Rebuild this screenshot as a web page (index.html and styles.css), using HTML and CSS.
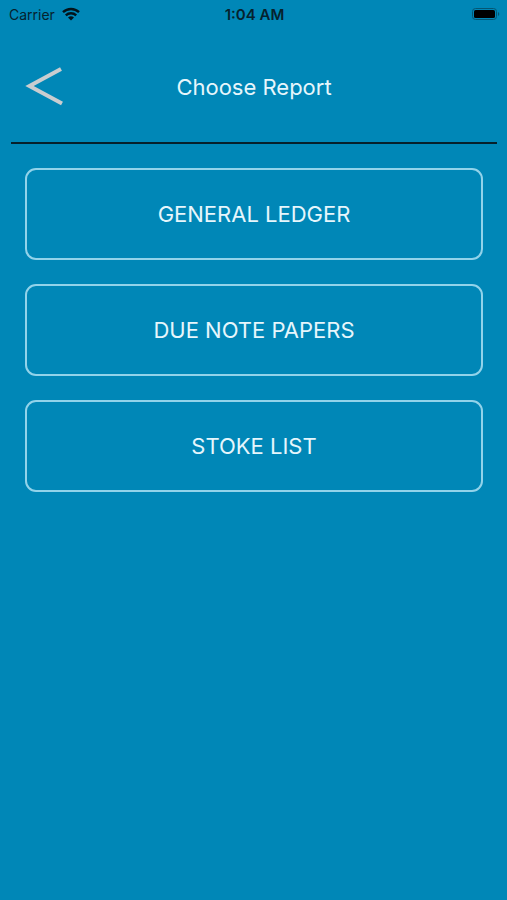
FILE: index.html
```html
<!DOCTYPE html>
<html lang="en">
<head>
<meta charset="utf-8">
<meta name="viewport" content="width=device-width, initial-scale=1">
<title>Choose Report</title>
<link rel="stylesheet" href="styles.css">
</head>
<body>
<div class="status">
  <div class="carrier">
    <span>Carrier</span>
    <svg class="wifi" viewBox="0 0 18 14" aria-hidden="true">
      <path d="M1 5.2a11.6 11.6 0 0 1 16 0M3.8 8.3a7.6 7.6 0 0 1 10.4 0"/>
      <path class="solid" d="M6 10.6a4.3 4.3 0 0 1 6 0L9 13.6z"/>
    </svg>
  </div>
  <time class="clock">1:04 AM</time>
  <svg class="battery" viewBox="0 0 28 12" aria-hidden="true">
    <rect class="shell" x=".5" y=".5" width="24" height="11" rx="3"/>
    <rect x="2" y="2" width="21" height="8" rx="1.6"/>
    <path class="cap" d="M26 4a2.2 2.2 0 0 1 0 4z"/>
  </svg>
</div>
<header class="header">
  <button class="back" type="button" aria-label="Back">
    <svg viewBox="0 0 38 40" aria-hidden="true"><path d="M36 2L4.500 19L37 36.500"/></svg>
  </button>
  <h1 class="title">Choose Report</h1>
</header>
<main class="reports">
  <button class="report" type="button">GENERAL LEDGER</button>
  <button class="report" type="button">DUE NOTE PAPERS</button>
  <button class="report" type="button">STOKE LIST</button>
</main>
</body>
</html>
```
FILE: styles.css
```css
* { box-sizing: border-box; }

body {
  margin: 0;
  min-height: 100vh;
  background: #0087b7;
  color: #e6f6fc;
  font-family: Inter, "Liberation Sans", sans-serif;
}

.status {
  display: grid;
  grid-template-columns: 1fr auto 1fr;
  align-items: center;
  height: 28px;
  padding: 0 7px 0 9px;
  color: #06222e;
  font-size: 14px;
}

.carrier {
  display: flex;
  align-items: center;
  gap: 7px;
}

.wifi {
  width: 18px;
  height: 14px;
  fill: none;
  stroke: #03141b;
  stroke-width: 2.4;
}

.wifi .solid { fill: #03141b; stroke: none; }

.clock { font-size: 15px; font-weight: 600; }

.battery {
  width: 28px;
  height: 12px;
  justify-self: end;
  fill: #000;
}

.battery .shell { fill: none; stroke: #045672; }
.battery .cap { fill: #045672; }

.header {
  display: grid;
  grid-template-columns: 48px 1fr 48px;
  align-items: center;
  height: 116px;
  margin: 0 10px 0 11px;
  padding: 4px 14px 0;
  border-bottom: 2px solid #06202b;
}

.back {
  display: flex;
  padding: 0;
  border: 0;
  background: none;
  cursor: pointer;
}

.back svg {
  width: 38px;
  height: 40px;
  fill: none;
  stroke: #c9cdd0;
  stroke-width: 4;
}

.title {
  margin: 0;
  font-size: 22px;
  font-weight: 400;
  text-align: center;
}

.reports {
  display: flex;
  flex-direction: column;
  gap: 24px;
  padding: 24px 24px 24px 25px;
}

.report {
  height: 92px;
  border: 2px solid #92d3ea;
  border-radius: 11px;
  background: none;
  color: inherit;
  font: inherit;
  font-size: 22px;
  cursor: pointer;
}
```
